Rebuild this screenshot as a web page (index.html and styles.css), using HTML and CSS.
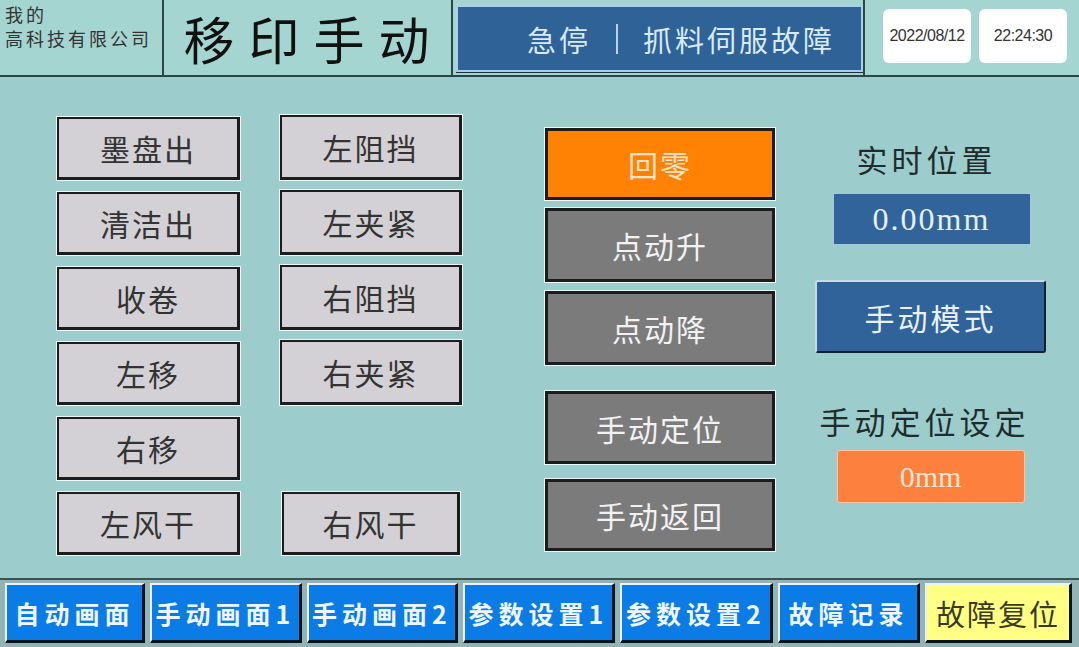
FILE: index.html
```html
<!DOCTYPE html>
<html>
<head>
  <meta charset="utf-8">
  <title>移印手动</title>
  <link rel="stylesheet" href="styles.css">
</head>
<body>
  <div class="screen">
    <div class="header">
      <div class="brand">
        <div>我的</div>
        <div>高科技有限公司</div>
      </div>
      <div class="title">移印手动</div>
      <div class="alarm-cell">
        <div class="alarm">
          <span>急停</span>
          <span class="alarm-sep"></span>
          <span>抓料伺服故障</span>
        </div>
      </div>
      <div class="clock">
        <div class="clock-box">2022/08/12</div>
        <div class="clock-box">22:24:30</div>
      </div>
    </div>

    <div class="main">
      <!-- output buttons -->
      <div class="io-grid">
        <div class="btn c1 r1">墨盘出</div>
        <div class="btn c2 r1 up">左阻挡</div>
        <div class="btn c1 r2">清洁出</div>
        <div class="btn c2 r2 up">左夹紧</div>
        <div class="btn c1 r3">收卷</div>
        <div class="btn c2 r3 up">右阻挡</div>
        <div class="btn c1 r4">左移</div>
        <div class="btn c2 r4 up">右夹紧</div>
        <div class="btn c1 r5">右移</div>
        <div class="btn c1 r6">左风干</div>
        <div class="btn c2 r6 narrow">右风干</div>
      </div>

      <div class="motion">
        <div class="btn dark home">回零</div>
        <div class="btn dark jog-up">点动升</div>
        <div class="btn dark jog-down">点动降</div>
        <div class="btn dark pos">手动定位</div>
        <div class="btn dark back">手动返回</div>
      </div>

      <div class="info">
        <div class="label">实时位置</div>
        <div class="readout">0.00mm</div>
        <div class="mode-btn">手动模式</div>
        <div class="label set-label">手动定位设定</div>
        <div class="setpoint">0mm</div>
      </div>
    </div>

    <div class="nav">
      <div class="nav-btn">自动画面</div>
      <div class="nav-btn">手动画面1</div>
      <div class="nav-btn">手动画面2</div>
      <div class="nav-btn">参数设置1</div>
      <div class="nav-btn">参数设置2</div>
      <div class="nav-btn">故障记录</div>
      <div class="nav-btn reset">故障复位</div>
    </div>
  </div>
</body>
</html>
```

FILE: styles.css
```css
:root {
  --bg: #9dcccc;
  --header-bg: #a5d5d1;
  --line: #2a4646;
  --gray: #d3d1d5;
  --gray-dark: #7c7b7c;
  --orange: #ff8205;
  --blue: #31649a;
  --nav-blue: #0b7be6;
  --cjk: "Noto Sans CJK SC", "Noto Sans", sans-serif;
}

html, body {
  margin: 0;
  width: 1079px;
  height: 647px;
  overflow: hidden;
}

body {
  background: var(--bg);
  font-family: var(--cjk);
  color: #2b2b2b;
}

.screen {
  display: flex;
  flex-direction: column;
  height: 647px;
}

/* header */
.header {
  display: flex;
  height: 75px;
  background: var(--header-bg);
  border-bottom: 2px solid var(--line);
}

.brand {
  width: 157px;
  padding: 2px 0 0 5px;
  border-right: 2px solid var(--line);
  font-size: 18px;
  line-height: 24px;
  letter-spacing: 3px;
  color: #333;
}

.title {
  width: 289px;
  height: 75px;
  border-right: 2px solid var(--line);
  display: flex;
  align-items: center;
  justify-content: center;
  font-size: 51px;
  line-height: 74px;
  letter-spacing: 14px;
  color: #111;
  padding-left: 12px;
  box-sizing: border-box;
}

.alarm-cell {
  width: 407px;
  padding: 5px 0 0 3px;
  border-right: 2px solid var(--line);
}

.alarm {
  height: 63px;
  background: #2f6296;
  border: 2px solid #a9d0e6;
  box-shadow: 0 1px 0 #203040;
  display: flex;
  align-items: center;
  justify-content: flex-end;
  gap: 25px;
  padding-right: 26px;
  font-size: 29px;
  letter-spacing: 3px;
  color: #d8eaf8;
}

.alarm-sep {
  width: 2px;
  height: 30px;
  background: #b8d4ea;
}

.clock {
  display: flex;
  gap: 8px;
  padding: 9px 0 0 18px;
}

.clock-box {
  width: 88px;
  height: 54px;
  background: #fff;
  border-radius: 6px;
  display: flex;
  align-items: center;
  justify-content: center;
  font-family: "Liberation Sans", Arial, sans-serif;
  font-size: 16px;
  letter-spacing: -0.5px;
  color: #333;
}

/* main area */
.main {
  flex: 1;
  display: flex;
  align-items: flex-start;
  padding-left: 57px;
}

.btn {
  display: flex;
  align-items: center;
  justify-content: center;
  box-sizing: border-box;
  background: var(--gray);
  border: 2px solid #1c1c1c;
  border-right-width: 3px;
  border-bottom-width: 3px;
  box-shadow: 0 0 0 1px #eef8f8;
  font-size: 30px;
  letter-spacing: 2px;
  color: #333;
}

.io-grid {
  display: grid;
  grid-template-columns: 183px 182px;
  grid-template-rows: repeat(6, 63px);
  column-gap: 40px;
  row-gap: 12px;
  padding-top: 40px;
}

.c1 { grid-column: 1; }
.c2 { grid-column: 2; }
.r1 { grid-row: 1; }
.r2 { grid-row: 2; }
.r3 { grid-row: 3; }
.r4 { grid-row: 4; }
.r5 { grid-row: 5; }
.r6 { grid-row: 6; }

.btn.up {
  margin-top: -2px;
}

.btn.narrow {
  margin: 0 2px 0 2px;
}

.motion {
  display: flex;
  flex-direction: column;
  width: 230px;
  margin-left: 83px;
  padding-top: 51px;
}

.btn.dark {
  background: var(--gray-dark);
  color: #f2f2f2;
  border-width: 3px;
}

.btn.home {
  height: 72px;
  background: var(--orange);
  color: #fde3c8;
}

.btn.jog-up {
  height: 74px;
  margin-top: 8px;
}

.btn.jog-down {
  height: 74px;
  margin-top: 9px;
}

.btn.pos {
  height: 73px;
  margin-top: 26px;
}

.btn.back {
  height: 72px;
  margin-top: 15px;
}

.info {
  width: 231px;
  margin-left: 40px;
  padding-top: 64px;
  display: flex;
  flex-direction: column;
  align-items: center;
}

.label {
  font-size: 31px;
  line-height: 36px;
  letter-spacing: 4px;
  color: #1d2c2c;
  margin-right: 8px;
}

.readout {
  width: 198px;
  height: 52px;
  margin-top: 16px;
  box-sizing: border-box;
  background: var(--blue);
  border: 1px solid #a6c6de;
  display: flex;
  align-items: center;
  justify-content: center;
  font-family: "Liberation Serif", serif;
  font-size: 32px;
  letter-spacing: 2px;
  color: #e6f0f8;
  margin-left: 2px;
}

.mode-btn {
  width: 231px;
  height: 73px;
  margin-top: 35px;
  box-sizing: border-box;
  background: #2f6399;
  border: 2px solid #14202c;
  border-top-color: #c8dce8;
  border-left-color: #c8dce8;
  border-radius: 3px;
  display: flex;
  align-items: center;
  justify-content: center;
  font-size: 30px;
  letter-spacing: 3px;
  color: #e8f0f8;
}

.set-label {
  margin-top: 50px;
  margin-right: 12px;
}

.setpoint {
  width: 188px;
  height: 53px;
  margin-top: 11px;
  box-sizing: border-box;
  background: #fd803e;
  border: 1px solid #ffc4a4;
  border-radius: 3px;
  display: flex;
  align-items: center;
  justify-content: center;
  font-family: "Liberation Serif", serif;
  font-size: 30px;
  color: #ffe6d4;
}

/* bottom navigation */
.nav {
  height: 64px;
  display: grid;
  grid-template-columns: 140px 152px 151px 152px 153px 142px 147px;
  gap: 5px;
  padding: 3px 5px 0;
  background: #93b3b4;
  border-top: 2px solid #3a5252;
}

.nav-btn {
  height: 60px;
  box-sizing: border-box;
  background: var(--nav-blue);
  border: 3px solid #08131e;
  border-top: 2px solid #e8f2fa;
  border-left: 2px solid #e8f2fa;
  display: flex;
  align-items: center;
  justify-content: center;
  font-size: 25px;
  font-weight: bold;
  letter-spacing: 5px;
  color: #eef6ff;
  white-space: nowrap;
}

.nav-btn.reset {
  background: #ffff84;
  color: #3a3a22;
  font-weight: normal;
  font-size: 29px;
  letter-spacing: 2px;
}
```
